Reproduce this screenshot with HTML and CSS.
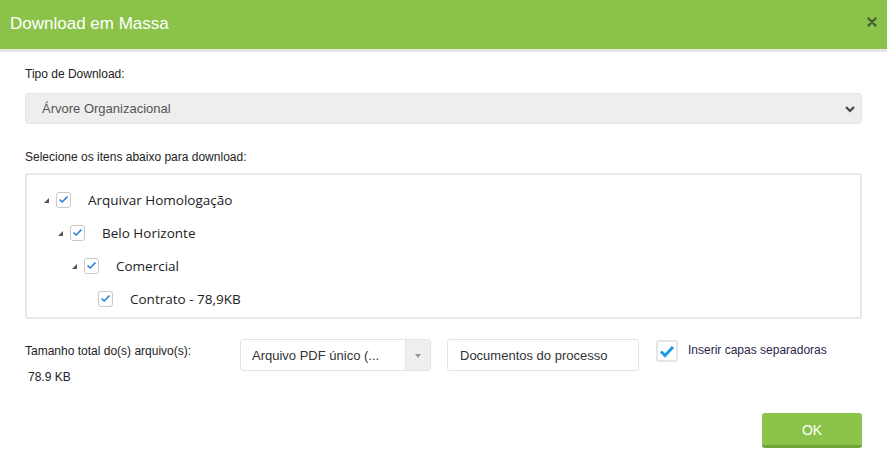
FILE: index.html
```html
<!DOCTYPE html>
<html lang="pt">
<head>
<meta charset="utf-8">
<link rel="stylesheet" href="styles.css">
</head>
<body>
<div class="modal">
  <div class="header">
    <span class="title">Download em Massa</span>
    <svg class="close" width="10" height="10" viewBox="0 0 10 10"><path d="M1.5 1.5 L8.5 8.5 M8.5 1.5 L1.5 8.5" stroke="#43612a" stroke-width="2.4" stroke-linecap="round"/></svg>
  </div>
  <div class="body">
    <label class="lbl">Tipo de Download:</label>
    <div class="select-big">
      <span>Árvore Organizacional</span>
      <svg class="chev" width="10" height="8" viewBox="0 0 10 8"><path d="M1 2 L5 6 L9 2" fill="none" stroke="#444" stroke-width="2.2"/></svg>
    </div>
    <label class="lbl lbl2">Selecione os itens abaixo para download:</label>
    <div class="tree">
      <div class="row l0"><span class="tri"></span><span class="cb"><svg width="11" height="9" viewBox="0 0 11 9"><path d="M1.5 4.5 L4.2 7 L9.5 1.5" fill="none" stroke="#2a7bd8" stroke-width="1.6"/></svg></span><span class="txt">Arquivar Homologação</span></div>
      <div class="row l1"><span class="tri"></span><span class="cb"><svg width="11" height="9" viewBox="0 0 11 9"><path d="M1.5 4.5 L4.2 7 L9.5 1.5" fill="none" stroke="#2a7bd8" stroke-width="1.6"/></svg></span><span class="txt">Belo Horizonte</span></div>
      <div class="row l2"><span class="tri"></span><span class="cb"><svg width="11" height="9" viewBox="0 0 11 9"><path d="M1.5 4.5 L4.2 7 L9.5 1.5" fill="none" stroke="#2a7bd8" stroke-width="1.6"/></svg></span><span class="txt">Comercial</span></div>
      <div class="row l3"><span class="tri none"></span><span class="cb"><svg width="11" height="9" viewBox="0 0 11 9"><path d="M1.5 4.5 L4.2 7 L9.5 1.5" fill="none" stroke="#2a7bd8" stroke-width="1.6"/></svg></span><span class="txt">Contrato - 78,9KB</span></div>
    </div>
    <div class="bottom">
      <div class="size">
        <div class="size-lbl">Tamanho total do(s) arquivo(s):</div>
        <div class="size-val">78.9 KB</div>
      </div>
      <div class="combo">
        <span class="combo-txt">Arquivo PDF único (...</span>
        <span class="combo-btn"><svg width="6" height="4" viewBox="0 0 6 4"><path d="M0 0 H6 L3 4 Z" fill="#999"/></svg></span>
      </div>
      <div class="input">Documentos do processo</div>
      <div class="chk">
        <span class="chk-box"><svg width="16" height="13" viewBox="0 0 16 13"><path d="M2 6.5 L6 10.5 L14 2" fill="none" stroke="#1a9be6" stroke-width="3"/></svg></span>
        <span class="chk-lbl">Inserir capas separadoras</span>
      </div>
    </div>
    <div class="footer">
      <button class="ok">OK</button>
    </div>
  </div>
</div>
</body>
</html>
```
FILE: styles.css
```css
* { box-sizing: border-box; }
html, body { margin: 0; padding: 0; background: #fff; }
body { font-family: "Liberation Sans", Arial, sans-serif; color: #333; width: 887px; height: 460px; overflow: hidden; }
.modal { width: 887px; }
.header {
  height: 52px;
  background: #8bc34a;
  border-bottom: 3px solid #e5e5e5;
  display: flex;
  align-items: center;
  justify-content: space-between;
  padding: 0 10px 0 10px;
}
.title { color: #fff; font-size: 17px; margin-top: -1px; }
.close { margin-top: -5px; }
.body { padding: 15px 25px 0 25px; display: flex; flex-direction: column; }
.lbl { font-size: 12px; color: #222; line-height: 14px; display: block; }
.select-big {
  margin-top: 12px;
  height: 31px;
  background: #eee;
  border: 1px solid #e6e6e6;
  border-radius: 3px;
  display: flex;
  align-items: center;
  justify-content: space-between;
  padding: 0 6px 0 16px;
  font-size: 13px;
  color: #555;
}
.chev { margin-top: 1px; }
.lbl2 { margin-top: 26px; }
.tree {
  margin-top: 9px;
  height: 146px;
  border: 2px solid #e7e9eb;
  border-radius: 2px;
  padding: 8px 0 0 17px;
  font-family: "Open Sans", "Noto Sans", sans-serif;
  font-size: 13.5px;
  color: #222;
}
.row { height: 33px; display: flex; align-items: center; }
.row.l1 { padding-left: 14px; }
.row.l2 { padding-left: 28px; }
.row.l3 { padding-left: 42px; }
.tri {
  width: 0; height: 0;
  border-left: 5px solid transparent;
  border-bottom: 5px solid #555;
  margin-right: 7px;
  margin-top: 2px;
}
.tri.none { border-bottom-color: transparent; }
.cb {
  width: 15px; height: 16px;
  border: 1px solid #c9c9c9;
  border-radius: 3px;
  display: flex; align-items: center; justify-content: center;
  background: #fff;
}
.txt { margin-left: 17px; line-height: 16px; }
.bottom { margin-top: 20px; display: flex; align-items: flex-start; }
.size { width: 215px; padding-top: 5px; }
.size-lbl { font-size: 12px; color: #222; }
.size-val { font-size: 12px; color: #222; margin-top: 12px; padding-left: 3px; }
.combo {
  width: 191px; height: 32px;
  border: 1px solid #e3e3e3;
  border-radius: 3px;
  display: flex; align-items: stretch;
  font-size: 13px; color: #333;
}
.combo-txt { flex: 1; display: flex; align-items: center; padding-left: 11px; }
.combo-btn { width: 25px; background: #efefef; display: flex; align-items: center; justify-content: center; border-left: 1px solid #e6e6e6; padding-top: 2px; }
.input {
  margin-left: 16px;
  width: 192px; height: 32px;
  border: 1px solid #e3e3e3;
  border-radius: 3px;
  display: flex; align-items: center;
  padding-left: 12px;
  font-size: 13px; color: #333;
}
.chk { margin-left: 17px; display: flex; align-items: center; margin-top: 1px; }
.chk-box {
  width: 22px; height: 22px;
  border: 2px solid #e3e6e9;
  border-radius: 3px;
  display: flex; align-items: center; justify-content: center;
}
.chk-lbl { font-size: 12px; color: #2d1f4a; margin-left: 10px; margin-top: -2px; }
.footer { display: flex; justify-content: flex-end; margin-top: 29px; }
.ok {
  width: 100px; height: 35px;
  background: #8bc34a;
  border: none;
  border-bottom: 3px solid #6fa63a;
  border-radius: 3px;
  color: #fff;
  font-family: "Liberation Sans", Arial, sans-serif;
  font-size: 14px;
  padding: 2px 0 0 0;
}
```
